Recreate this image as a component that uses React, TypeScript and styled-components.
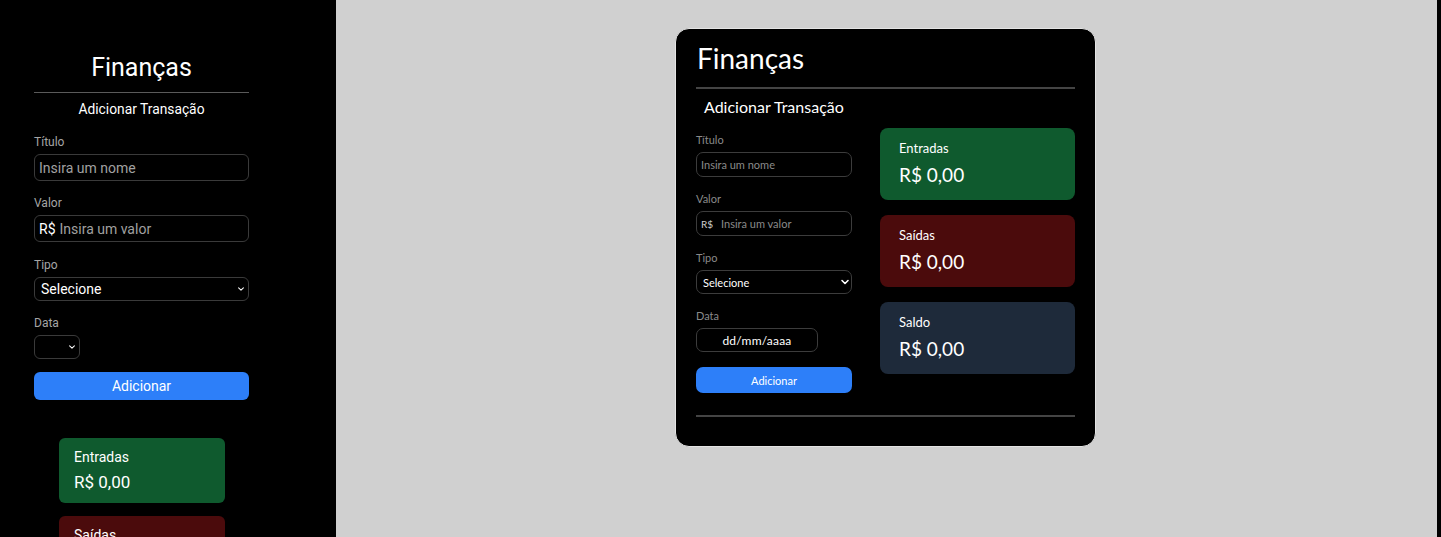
import React from "react";
import styled, { createGlobalStyle } from "styled-components";

const Global = createGlobalStyle`
  html, body { margin: 0; padding: 0; background: #d0d0d0; }
  * { box-sizing: border-box; }
  #root { width: 1441px; height: 537px; }
`;

const Page = styled.div`
  display: flex;
  width: 1441px;
  height: 537px;
  overflow: hidden;
`;

/* ---------- mobile panel ---------- */
const MobilePanel = styled.aside`
  flex: 0 0 336px;
  background: #000;
  padding: 53px 0 0 34px;
  font-family: Roboto, "Liberation Sans", sans-serif;
  color: #fff;
  overflow: hidden;
`;

const MobileColumn = styled.div`
  width: 215px;
  display: flex;
  flex-direction: column;
`;

const MobileTitle = styled.h1`
  margin: 0;
  font-size: 25px;
  line-height: 30px;
  font-weight: 400;
  text-align: center;
`;

const Rule = styled.hr<{ $mt: number; $thick?: number; $color?: string }>`
  margin: ${(p) => p.$mt}px 0 0;
  border: 0;
  height: ${(p) => p.$thick ?? 1}px;
  background: ${(p) => p.$color ?? "#555"};
  width: 100%;
`;

const MobileSubtitle = styled.h2`
  margin: 6px 0 0;
  font-size: 13.8px;
  line-height: 20px;
  font-weight: 400;
  text-align: center;
`;

const MobileLabel = styled.label<{ $mt: number }>`
  display: block;
  margin-top: ${(p) => p.$mt}px;
  font-size: 12px;
  line-height: 16px;
  color: #a5a5a5;
`;

const MobileField = styled.div<{ $h: number; $w?: number; $mt?: number }>`
  position: relative;
  display: flex;
  align-items: center;
  margin-top: ${(p) => p.$mt ?? 5}px;
  height: ${(p) => p.$h}px;
  width: ${(p) => (p.$w ? `${p.$w}px` : "100%")};
  border: 1px solid #3a3a3a;
  border-radius: 6px;
  padding: 0 4px;
  font-size: 14px;
  color: #fff;
`;

const MobileInput = styled.input`
  flex: 1;
  min-width: 0;
  background: transparent;
  border: 0;
  outline: none;
  padding: 0;
  font-family: inherit;
  font-size: 14px;
  color: #fff;
  &::placeholder { color: #a0a0a0; }
`;

const Prefix = styled.span<{ $size: number; $gap: number; $color: string }>`
  font-size: ${(p) => p.$size}px;
  color: ${(p) => p.$color};
  margin-right: ${(p) => p.$gap}px;
`;

const SelectText = styled.span<{ $size: number; $pad: number }>`
  flex: 1;
  font-size: ${(p) => p.$size}px;
  padding-left: ${(p) => p.$pad}px;
  color: #fff;
`;

const Chevron = styled.svg<{ $right: number; $size: number }>`
  position: absolute;
  right: ${(p) => p.$right}px;
  top: 50%;
  width: ${(p) => p.$size}px;
  height: ${(p) => p.$size}px;
  transform: translateY(-50%);
`;

const MobileButton = styled.button`
  margin-top: 13px;
  height: 28px;
  width: 100%;
  border: 0;
  border-radius: 6px;
  background: #2d7ff9;
  color: #fff;
  font-family: inherit;
  font-size: 14px;
`;

const MobileCards = styled.div`
  margin: 38px 0 0 25px;
  width: 166px;
  display: flex;
  flex-direction: column;
  gap: 13px;
`;

const MobileCard = styled.div<{ $bg: string }>`
  background: ${(p) => p.$bg};
  border-radius: 6px;
  padding: 10px 15px 9px;
  height: 65px;
`;

const MobileCardTitle = styled.div`
  font-size: 14px;
  line-height: 18px;
`;

const MobileCardValue = styled.div`
  margin-top: 5px;
  font-size: 17px;
  line-height: 22px;
`;

/* ---------- desktop view ---------- */
const Stage = styled.main`
  flex: 1;
  background: #d0d0d0;
  display: flex;
  justify-content: center;
  align-items: flex-start;
  padding: 28px 2px 0 0;
`;

const EdgeStrip = styled.div`
  flex: 0 0 4px;
  background: #000;
`;

const Card = styled.section`
  width: 421px;
  background: #000;
  border: 1px solid #e4e4e4;
  border-radius: 14px;
  padding: 12px 20px 29px;
  font-family: Lato, "Open Sans", sans-serif;
  color: #fff;
`;

const Title = styled.h1`
  margin: 0;
  font-size: 28px;
  line-height: 34px;
  font-weight: 400;
  padding-left: 1px;
`;

const SubTitle = styled.h2`
  margin: 8px 0 0 8px;
  font-size: 16px;
  line-height: 20px;
  font-weight: 400;
`;

const Body = styled.div`
  margin-top: 11px;
  display: grid;
  grid-template-columns: 156px 195px;
  column-gap: 28px;
  align-items: start;
`;

const Form = styled.form`
  padding-top: 5px;
  display: flex;
  flex-direction: column;
`;

const Label = styled.label<{ $first?: boolean }>`
  display: block;
  margin-top: ${(p) => (p.$first ? 0 : 15)}px;
  font-size: 11px;
  line-height: 14px;
  color: #8a8a8a;
`;

const Field = styled.div<{ $h: number; $w?: number; $center?: boolean }>`
  position: relative;
  display: flex;
  align-items: center;
  justify-content: ${(p) => (p.$center ? "center" : "flex-start")};
  margin-top: 5px;
  height: ${(p) => p.$h}px;
  width: ${(p) => (p.$w ? `${p.$w}px` : "100%")};
  border: 1px solid #3c3c3c;
  border-radius: 7px;
  padding: 0 4px;
  font-size: 11px;
  color: #fff;
`;

const Input = styled.input`
  flex: 1;
  min-width: 0;
  background: transparent;
  border: 0;
  outline: none;
  padding: 0;
  font-family: inherit;
  font-size: 11px;
  color: #fff;
  &::placeholder { color: #8a8a8a; }
`;

const DateText = styled.span`
  font-size: 12px;
  color: #fff;
  letter-spacing: 0.2px;
`;

const Button = styled.button`
  margin-top: 15px;
  height: 26px;
  width: 100%;
  border: 0;
  border-radius: 7px;
  background: #2d7ff9;
  color: #fff;
  font-family: inherit;
  font-size: 11px;
`;

const Summary = styled.div`
  display: flex;
  flex-direction: column;
  gap: 15px;
`;

const SummaryCard = styled.div<{ $bg: string }>`
  background: ${(p) => p.$bg};
  border-radius: 8px;
  height: 72px;
  padding: 12px 19px 0;
`;

const SummaryTitle = styled.div`
  font-size: 13px;
  line-height: 16px;
`;

const SummaryValue = styled.div`
  margin-top: 7px;
  font-size: 19px;
  line-height: 24px;
`;

const ChevronIcon = ({ right, size, stroke }: { right: number; size: number; stroke: number }) => (
  <Chevron $right={right} $size={size} viewBox="0 0 10 10" fill="none">
    <path d="M2 3.5 L5 6.5 L8 3.5" stroke="#fff" strokeWidth={stroke} strokeLinecap="round" strokeLinejoin="round" />
  </Chevron>
);

const GREEN = "#0f5a2e";
const RED = "#4b0b0c";
const SLATE = "#1e2a3a";

export default function App() {
  return (
    <>
      <Global />
      <Page>
        <MobilePanel>
          <MobileColumn>
            <MobileTitle>Finanças</MobileTitle>
            <Rule $mt={9} $color="#5a5a5a" />
            <MobileSubtitle>Adicionar Transação</MobileSubtitle>

            <MobileLabel $mt={15}>Título</MobileLabel>
            <MobileField $h={27} $mt={4}>
              <MobileInput placeholder="Insira um nome" />
            </MobileField>

            <MobileLabel $mt={14}>Valor</MobileLabel>
            <MobileField $h={27} $mt={4}>
              <Prefix $size={14} $gap={4} $color="#fff">R$</Prefix>
              <MobileInput placeholder="Insira um valor" />
            </MobileField>

            <MobileLabel $mt={15}>Tipo</MobileLabel>
            <MobileField $h={24} $mt={4}>
              <SelectText $size={14} $pad={2}>Selecione</SelectText>
              <ChevronIcon right={3} size={8} stroke={1.3} />
            </MobileField>

            <MobileLabel $mt={14}>Data</MobileLabel>
            <MobileField $h={24} $w={46} $mt={4}>
              <ChevronIcon right={3} size={8} stroke={1.3} />
            </MobileField>

            <MobileButton type="button">Adicionar</MobileButton>
          </MobileColumn>

          <MobileCards>
            <MobileCard $bg={GREEN}>
              <MobileCardTitle>Entradas</MobileCardTitle>
              <MobileCardValue>R$ 0,00</MobileCardValue>
            </MobileCard>
            <MobileCard $bg={RED}>
              <MobileCardTitle>Saídas</MobileCardTitle>
              <MobileCardValue>R$ 0,00</MobileCardValue>
            </MobileCard>
          </MobileCards>
        </MobilePanel>

        <Stage>
          <Card>
            <Title>Finanças</Title>
            <Rule $mt={12} $thick={2} $color="#444" />
            <SubTitle>Adicionar Transação</SubTitle>

            <Body>
              <Form>
                <Label $first>Título</Label>
                <Field $h={25}>
                  <Input placeholder="Insira um nome" />
                </Field>

                <Label>Valor</Label>
                <Field $h={25}>
                  <Prefix $size={10} $gap={8} $color="#cfcfcf">R$</Prefix>
                  <Input placeholder="Insira um valor" />
                </Field>

                <Label>Tipo</Label>
                <Field $h={24}>
                  <SelectText $size={11} $pad={2}>Selecione</SelectText>
                  <ChevronIcon right={1} size={10} stroke={1.6} />
                </Field>

                <Label>Data</Label>
                <Field $h={24} $w={122} $center>
                  <DateText>dd/mm/aaaa</DateText>
                </Field>

                <Button type="button">Adicionar</Button>
              </Form>

              <Summary>
                <SummaryCard $bg={GREEN}>
                  <SummaryTitle>Entradas</SummaryTitle>
                  <SummaryValue>R$ 0,00</SummaryValue>
                </SummaryCard>
                <SummaryCard $bg={RED}>
                  <SummaryTitle>Saídas</SummaryTitle>
                  <SummaryValue>R$ 0,00</SummaryValue>
                </SummaryCard>
                <SummaryCard $bg={SLATE}>
                  <SummaryTitle>Saldo</SummaryTitle>
                  <SummaryValue>R$ 0,00</SummaryValue>
                </SummaryCard>
              </Summary>
            </Body>

            <Rule $mt={22} $thick={2} $color="#444" />
          </Card>
        </Stage>
        <EdgeStrip />
      </Page>
    </>
  );
}
